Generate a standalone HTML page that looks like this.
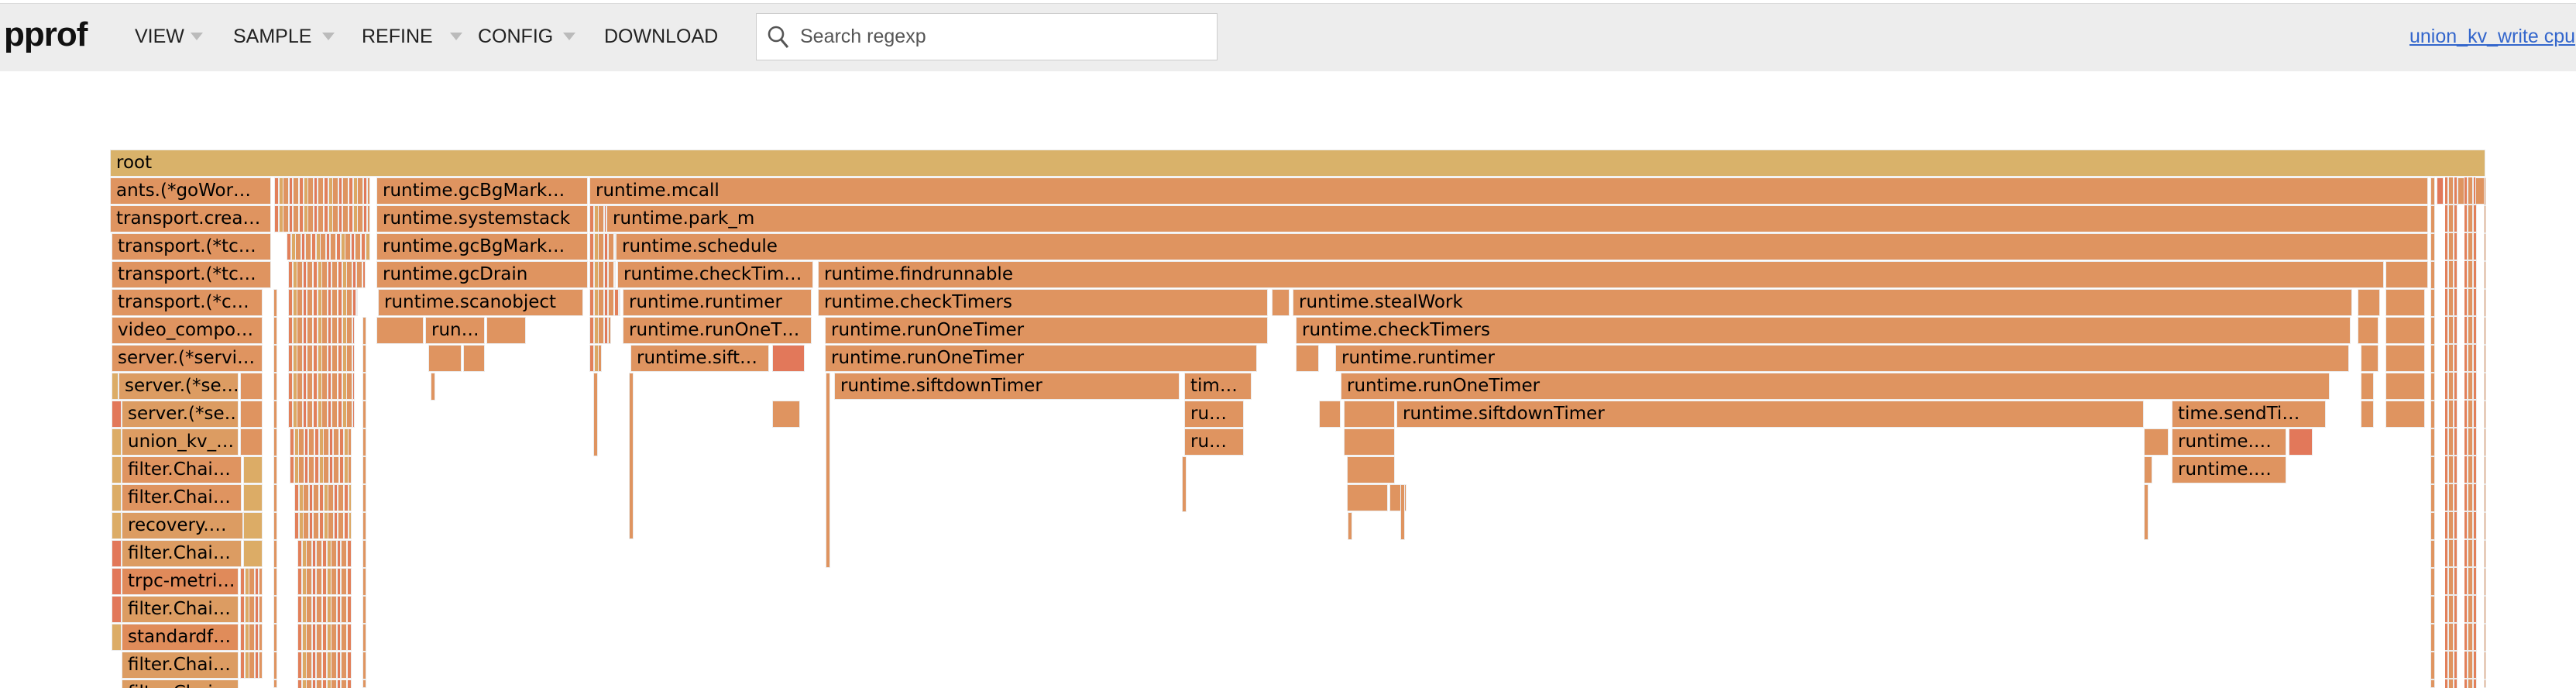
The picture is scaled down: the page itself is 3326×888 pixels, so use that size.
<!DOCTYPE html>
<html><head><meta charset="utf-8"><style>
html,body{margin:0;padding:0;background:#fff;width:3326px;height:888px;overflow:hidden;position:relative;font-family:"Liberation Sans",sans-serif}
#hdr{position:absolute;left:0;top:4px;width:3326px;height:87px;background:#ededed;border-top:1px solid #dcdcdc}
.m{position:absolute;top:32px;font-size:25px;color:#222;line-height:30px}
.tri{position:absolute;top:42px;width:0;height:0;border-left:8px solid transparent;border-right:8px solid transparent;border-top:10px solid #bbb}
.b{position:absolute;height:35px;background:#df9460;border:1px solid #ececec;box-sizing:border-box;font:23px "DejaVu Sans",sans-serif;line-height:33px;padding-left:7px;overflow:hidden;white-space:nowrap;color:#000}
.r{background:#e2785a}.y{background:#dcac66}.l{background:#dc9c62}
.s{position:absolute;height:35px;box-sizing:border-box;border:1px solid #ececec;background:repeating-linear-gradient(90deg,#e2805a 0 4px,#eee 4px 6px,#dca864 6px 10px,#eee 10px 11px,#df9460 11px 17px,#eee 17px 19px,#e07a5a 19px 22px,#eee 22px 24px,#df9460 24px 30px,#f4f4f4 30px 32px)}
.t{position:absolute;width:6px;background:#df9460;border:1px solid #ececec;box-sizing:border-box}
.v{position:absolute;top:229px;height:659px;box-sizing:border-box;border:1px solid #ececec;background:repeating-linear-gradient(180deg,#df9460 0 34px,#ececec 34px 36px)}
.vs{position:absolute;top:229px;height:659px;background:repeating-linear-gradient(180deg,transparent 0 34px,#ececec 34px 36px),repeating-linear-gradient(90deg,#e2805a 0 3px,#eee 3px 5px,#df9460 5px 10px,#eee 10px 12px)}
</style></head><body>
<div id="hdr"></div>
<div style="position:absolute;left:5px;top:20px;font:bold 44px 'Liberation Sans',sans-serif;color:#111;letter-spacing:-1px">pprof</div>
<div class="m" style="left:174px">VIEW</div><div class="tri" style="left:246px"></div>
<div class="m" style="left:301px">SAMPLE</div><div class="tri" style="left:416px"></div>
<div class="m" style="left:467px">REFINE</div><div class="tri" style="left:581px"></div>
<div class="m" style="left:617px">CONFIG</div><div class="tri" style="left:727px"></div>
<div class="m" style="left:780px">DOWNLOAD</div>
<div style="position:absolute;left:976px;top:17px;width:596px;height:61px;background:#fff;border:1px solid #ccc;box-sizing:border-box"></div>
<svg style="position:absolute;left:990px;top:32px" width="30" height="32" viewBox="0 0 30 32"><circle cx="12" cy="12" r="9" fill="none" stroke="#555" stroke-width="2.6"/><line x1="18.5" y1="19" x2="27" y2="29" stroke="#555" stroke-width="3"/></svg>
<div class="m" style="left:1033px;color:#555">Search regexp</div>
<div class="m" style="left:3111px;color:#3366cc;text-decoration:underline;white-space:nowrap">union_kv_write cpu</div>

<div class="b" style="left:142px;top:193px;width:3067px;background:#d9b26a">root</div>

<div class="b" style="left:142px;top:229px;width:208px">ants.(*goWor…</div>
<div class="b" style="left:486px;top:229px;width:273px">runtime.gcBgMark…</div>
<div class="b" style="left:761px;top:229px;width:2374px">runtime.mcall</div>
<div class="b" style="left:142px;top:265px;width:208px">transport.crea…</div>
<div class="b" style="left:486px;top:265px;width:273px">runtime.systemstack</div>
<div class="b" style="left:783px;top:265px;width:2352px">runtime.park_m</div>
<div class="b" style="left:144px;top:301px;width:206px">transport.(*tc…</div>
<div class="b" style="left:486px;top:301px;width:273px">runtime.gcBgMark…</div>
<div class="b" style="left:795px;top:301px;width:2340px">runtime.schedule</div>
<div class="b" style="left:144px;top:337px;width:206px">transport.(*tc…</div>
<div class="b" style="left:486px;top:337px;width:273px">runtime.gcDrain</div>
<div class="b" style="left:797px;top:337px;width:253px">runtime.checkTim…</div>
<div class="b" style="left:1056px;top:337px;width:2022px">runtime.findrunnable</div>
<div class="b" style="left:3080px;top:337px;width:55px"></div>
<div class="b" style="left:144px;top:373px;width:195px">transport.(*c…</div>
<div class="b" style="left:488px;top:373px;width:265px">runtime.scanobject</div>
<div class="b" style="left:804px;top:373px;width:244px">runtime.runtimer</div>
<div class="b" style="left:1056px;top:373px;width:581px">runtime.checkTimers</div>
<div class="b" style="left:1642px;top:373px;width:23px"></div>
<div class="b" style="left:1669px;top:373px;width:1368px">runtime.stealWork</div>
<div class="b" style="left:3044px;top:373px;width:29px"></div>
<div class="b" style="left:3080px;top:373px;width:51px"></div>
<div class="b" style="left:144px;top:409px;width:195px">video_compo…</div>
<div class="b" style="left:486px;top:409px;width:61px"></div>
<div class="b" style="left:549px;top:409px;width:77px">run…</div>
<div class="b" style="left:628px;top:409px;width:51px"></div>
<div class="b" style="left:804px;top:409px;width:244px">runtime.runOneT…</div>
<div class="b" style="left:1065px;top:409px;width:572px">runtime.runOneTimer</div>
<div class="b" style="left:1673px;top:409px;width:1362px">runtime.checkTimers</div>
<div class="b" style="left:3044px;top:409px;width:27px"></div>
<div class="b" style="left:3080px;top:409px;width:51px"></div>
<div class="b" style="left:144px;top:445px;width:195px">server.(*servi…</div>
<div class="b" style="left:553px;top:445px;width:43px"></div>
<div class="b" style="left:598px;top:445px;width:28px"></div>
<div class="b" style="left:814px;top:445px;width:179px">runtime.sift…</div>
<div class="b r" style="left:997px;top:445px;width:42px"></div>
<div class="b" style="left:1065px;top:445px;width:558px">runtime.runOneTimer</div>
<div class="b" style="left:1673px;top:445px;width:30px"></div>
<div class="b" style="left:1724px;top:445px;width:1309px">runtime.runtimer</div>
<div class="b" style="left:3048px;top:445px;width:23px"></div>
<div class="b" style="left:3080px;top:445px;width:51px"></div>
<div class="b y" style="left:144px;top:481px;width:9px"></div>
<div class="b l" style="left:153px;top:481px;width:155px">server.(*se…</div>
<div class="b" style="left:310px;top:481px;width:29px"></div>
<div class="b" style="left:1077px;top:481px;width:446px">runtime.siftdownTimer</div>
<div class="b" style="left:1529px;top:481px;width:87px">tim…</div>
<div class="b" style="left:1731px;top:481px;width:1277px">runtime.runOneTimer</div>
<div class="b" style="left:3048px;top:481px;width:17px"></div>
<div class="b" style="left:3080px;top:481px;width:51px"></div>
<div class="b r" style="left:144px;top:517px;width:13px"></div>
<div class="b l" style="left:157px;top:517px;width:151px">server.(*se…</div>
<div class="b" style="left:310px;top:517px;width:29px"></div>
<div class="b" style="left:997px;top:517px;width:36px"></div>
<div class="b" style="left:1529px;top:517px;width:77px">ru…</div>
<div class="b" style="left:1703px;top:517px;width:28px"></div>
<div class="b" style="left:1735px;top:517px;width:66px"></div>
<div class="b" style="left:1803px;top:517px;width:965px">runtime.siftdownTimer</div>
<div class="b" style="left:2804px;top:517px;width:199px">time.sendTi…</div>
<div class="b" style="left:3048px;top:517px;width:17px"></div>
<div class="b" style="left:3080px;top:517px;width:51px"></div>
<div class="b y" style="left:144px;top:553px;width:13px"></div>
<div class="b l" style="left:157px;top:553px;width:151px">union_kv_…</div>
<div class="b" style="left:310px;top:553px;width:29px"></div>
<div class="b" style="left:1529px;top:553px;width:77px">ru…</div>
<div class="b" style="left:1735px;top:553px;width:66px"></div>
<div class="b" style="left:2768px;top:553px;width:32px"></div>
<div class="b" style="left:2804px;top:553px;width:148px">runtime.…</div>
<div class="b r" style="left:2955px;top:553px;width:31px"></div>
<div class="b y" style="left:144px;top:589px;width:13px"></div>
<div class="b" style="left:157px;top:589px;width:155px">filter.Chai…</div>
<div class="b y" style="left:314px;top:589px;width:25px"></div>
<div class="b" style="left:1739px;top:589px;width:62px"></div>
<div class="b" style="left:2768px;top:589px;width:11px"></div>
<div class="b" style="left:2804px;top:589px;width:148px">runtime.…</div>
<div class="b y" style="left:144px;top:625px;width:13px"></div>
<div class="b" style="left:157px;top:625px;width:155px">filter.Chai…</div>
<div class="b y" style="left:314px;top:625px;width:25px"></div>
<div class="b" style="left:1739px;top:625px;width:53px"></div>
<div class="b" style="left:1794px;top:625px;width:22px"></div>
<div class="b y" style="left:144px;top:661px;width:13px"></div>
<div class="b l" style="left:157px;top:661px;width:157px">recovery.…</div>
<div class="b y" style="left:314px;top:661px;width:25px"></div>
<div class="b r" style="left:144px;top:697px;width:13px"></div>
<div class="b l" style="left:157px;top:697px;width:155px">filter.Chai…</div>
<div class="b y" style="left:314px;top:697px;width:25px"></div>
<div class="b r" style="left:144px;top:733px;width:13px"></div>
<div class="b" style="left:157px;top:733px;width:151px;background:#e08a5a">trpc-metri…</div>
<div class="s" style="left:310px;top:733px;width:29px"></div>
<div class="b r" style="left:144px;top:769px;width:13px"></div>
<div class="b l" style="left:157px;top:769px;width:151px">filter.Chai…</div>
<div class="s" style="left:310px;top:769px;width:29px"></div>
<div class="b y" style="left:144px;top:805px;width:13px"></div>
<div class="b" style="left:157px;top:805px;width:151px;background:#e08c5a">standardf…</div>
<div class="s" style="left:310px;top:805px;width:29px"></div>
<div class="b l" style="left:157px;top:841px;width:151px">filter.Chai…</div>
<div class="s" style="left:310px;top:841px;width:29px"></div>
<div class="b l" style="left:157px;top:877px;width:151px">filter.Chai…</div>

<!-- left dense striped areas -->
<div class="s" style="left:354px;top:229px;width:124px"></div>
<div class="s" style="left:354px;top:265px;width:124px"></div>
<div class="s" style="left:370px;top:301px;width:108px"></div>
<div class="s" style="left:372px;top:337px;width:100px"></div>
<div class="s" style="left:372px;top:373px;width:90px"></div>
<div class="s" style="left:372px;top:409px;width:86px"></div>
<div class="s" style="left:372px;top:445px;width:86px"></div>
<div class="s" style="left:372px;top:481px;width:86px"></div>
<div class="s" style="left:372px;top:517px;width:86px"></div>
<div class="s" style="left:374px;top:553px;width:80px"></div>
<div class="s" style="left:374px;top:589px;width:80px"></div>
<div class="s" style="left:380px;top:625px;width:74px"></div>
<div class="s" style="left:380px;top:661px;width:74px"></div>
<div class="s" style="left:384px;top:697px;width:70px"></div>
<div class="s" style="left:384px;top:733px;width:70px"></div>
<div class="s" style="left:384px;top:769px;width:70px"></div>
<div class="s" style="left:384px;top:805px;width:70px"></div>
<div class="s" style="left:384px;top:841px;width:70px"></div>
<div class="s" style="left:384px;top:877px;width:70px"></div>
<div class="v" style="left:353px;width:5px;top:373px;height:515px"></div>
<div class="v" style="left:468px;width:5px;top:409px;height:479px"></div>
<div class="s" style="left:761px;top:265px;width:22px"></div>
<div class="s" style="left:761px;top:301px;width:34px"></div>
<div class="s" style="left:761px;top:337px;width:34px"></div>
<div class="s" style="left:761px;top:373px;width:40px"></div>
<div class="s" style="left:761px;top:409px;width:28px"></div>
<div class="s" style="left:761px;top:445px;width:16px"></div>

<!-- right slivers -->
<div class="v" style="left:3138px;width:6px"></div>
<div class="vs" style="left:3157px;width:16px"></div>
<div class="vs" style="left:3182px;width:16px"></div>
<div class="v" style="left:3207px;width:3px"></div>
<div class="b r" style="left:3146px;top:229px;width:8px"></div>
<div class="b" style="left:3196px;top:229px;width:12px"></div>
<div class="b" style="left:3173px;top:229px;width:9px"></div>

<!-- thin tails -->
<div class="t" style="left:812px;top:481px;height:215px"></div>
<div class="t" style="left:1066px;top:481px;height:252px"></div>
<div class="t" style="left:1526px;top:589px;height:72px"></div>
<div class="t" style="left:2768px;top:625px;height:72px"></div>
<div class="t" style="left:1808px;top:625px;height:72px"></div>
<div class="t" style="left:1740px;top:661px;height:36px"></div>
<div class="t" style="left:766px;top:481px;height:108px"></div>
<div class="t" style="left:556px;top:481px;height:36px"></div>
</body></html>
